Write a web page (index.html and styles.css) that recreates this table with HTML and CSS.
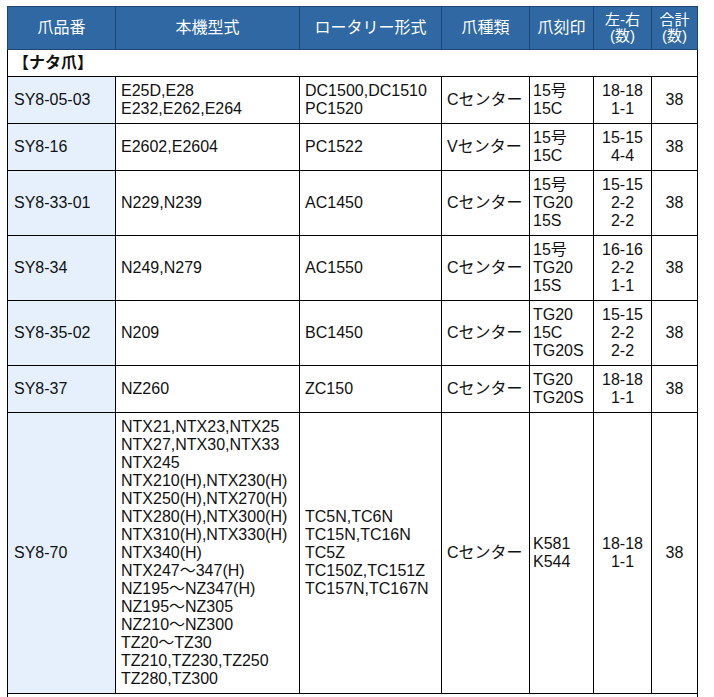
FILE: index.html
```html
<!DOCTYPE html>
<html lang="ja">
<head>
<meta charset="utf-8">
<title>爪品番</title>
<link rel="stylesheet" href="styles.css">
</head>
<body>
<table class="spec">
  <colgroup>
    <col class="c1"><col class="c2"><col class="c3"><col class="c4"><col class="c5"><col class="c6"><col class="c7">
  </colgroup>
  <thead>
    <tr>
      <th>爪品番</th>
      <th>本機型式</th>
      <th>ロータリー形式</th>
      <th>爪種類</th>
      <th>爪刻印</th>
      <th class="two">左-右<br>(数)</th>
      <th class="two">合計<br>(数)</th>
    </tr>
  </thead>
  <tbody>
    <tr class="section"><td colspan="7">【ナタ爪】</td></tr>
    <tr>
      <td class="code">SY8-05-03</td>
      <td>E25D,E28<br>E232,E262,E264</td>
      <td>DC1500,DC1510<br>PC1520</td>
      <td>Cセンター</td>
      <td class="mark">15号<br>15C</td>
      <td class="ctr">18-18<br>1-1</td>
      <td class="ctr">38</td>
    </tr>
    <tr>
      <td class="code">SY8-16</td>
      <td>E2602,E2604</td>
      <td>PC1522</td>
      <td>Vセンター</td>
      <td class="mark">15号<br>15C</td>
      <td class="ctr">15-15<br>4-4</td>
      <td class="ctr">38</td>
    </tr>
    <tr>
      <td class="code">SY8-33-01</td>
      <td>N229,N239</td>
      <td>AC1450</td>
      <td>Cセンター</td>
      <td class="mark">15号<br>TG20<br>15S</td>
      <td class="ctr">15-15<br>2-2<br>2-2</td>
      <td class="ctr">38</td>
    </tr>
    <tr>
      <td class="code">SY8-34</td>
      <td>N249,N279</td>
      <td>AC1550</td>
      <td>Cセンター</td>
      <td class="mark">15号<br>TG20<br>15S</td>
      <td class="ctr">16-16<br>2-2<br>1-1</td>
      <td class="ctr">38</td>
    </tr>
    <tr>
      <td class="code">SY8-35-02</td>
      <td>N209</td>
      <td>BC1450</td>
      <td>Cセンター</td>
      <td class="mark">TG20<br>15C<br>TG20S</td>
      <td class="ctr">15-15<br>2-2<br>2-2</td>
      <td class="ctr">38</td>
    </tr>
    <tr>
      <td class="code">SY8-37</td>
      <td>NZ260</td>
      <td>ZC150</td>
      <td>Cセンター</td>
      <td class="mark">TG20<br>TG20S</td>
      <td class="ctr">18-18<br>1-1</td>
      <td class="ctr">38</td>
    </tr>
    <tr>
      <td class="code">SY8-70</td>
      <td>NTX21,NTX23,NTX25<br>NTX27,NTX30,NTX33<br>NTX245<br>NTX210(H),NTX230(H)<br>NTX250(H),NTX270(H)<br>NTX280(H),NTX300(H)<br>NTX310(H),NTX330(H)<br>NTX340(H)<br>NTX247〜347(H)<br>NZ195〜NZ347(H)<br>NZ195〜NZ305<br>NZ210〜NZ300<br>TZ20〜TZ30<br>TZ210,TZ230,TZ250<br>TZ280,TZ300</td>
      <td>TC5N,TC6N<br>TC15N,TC16N<br>TC5Z<br>TC150Z,TC151Z<br>TC157N,TC167N</td>
      <td>Cセンター</td>
      <td class="mark">K581<br>K544</td>
      <td class="ctr">18-18<br>1-1</td>
      <td class="ctr">38</td>
    </tr>
    <tr class="section"><td colspan="7">&nbsp;</td></tr>
  </tbody>
</table>
</body>
</html>
```

FILE: styles.css
```css
html, body {
  margin: 0;
  padding: 0;
  background: #ffffff;
}

body {
  padding: 6px 0 0 7px;
  font-family: "Liberation Sans", "Noto Sans CJK JP", sans-serif;
  font-size: 16px;
  color: #111;
}

.spec {
  border-collapse: collapse;
  table-layout: fixed;
  width: 690px;
}

.c1 { width: 108px; }
.c2 { width: 184px; }
.c3 { width: 142px; }
.c4 { width: 88px; }
.c5 { width: 64px; }
.c6 { width: 58px; }
.c7 { width: 46px; }

.spec th {
  background: #2f68a2;
  color: #ffffff;
  font-weight: normal;
  font-size: 16px;
  text-align: center;
  vertical-align: middle;
  line-height: 18px;
  padding: 5px 2px;
  border: 1px solid #1d4674;
  white-space: nowrap;
}

.spec th.two {
  font-size: 15px;
  line-height: 16px;
  padding: 5px 0;
}

.spec td {
  border: 1px solid #000;
  line-height: 18px;
  padding: 5px 5px;
  vertical-align: middle;
  text-align: left;
  white-space: nowrap;
}

.spec td.code {
  background: #e5f0fc;
  padding-left: 6px;
}

.spec td.mark {
  padding-left: 3px;
  padding-right: 2px;
}

.spec td.ctr {
  text-align: center;
  padding-left: 2px;
  padding-right: 2px;
}

.spec tr.section td {
  font-weight: bold;
  padding: 4px 5px;
  line-height: 18px;
}
```
